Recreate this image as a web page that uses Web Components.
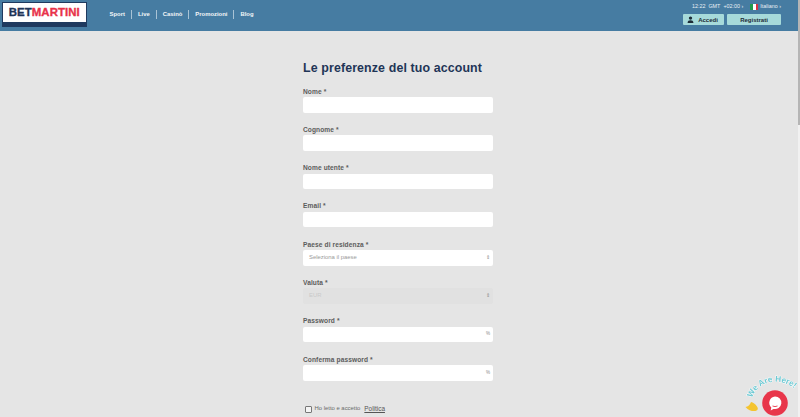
<!DOCTYPE html>
<html lang="it"><head><meta charset="utf-8"><title>Betmartini</title>
<style>
html,body{margin:0;height:417px;overflow:hidden;background:#e5e5e5;font-family:"Liberation Sans",Arial,sans-serif}
body{display:flex;flex-direction:column;width:800px}
</style></head><body>
<template id="t-header"><style>
:host{display:flex;height:31px;background:#467ca2;color:#fff;box-sizing:border-box;padding:2px 19px 0 2px;justify-content:space-between}
.left{display:flex;align-items:flex-start}
.logo{width:84.500px;height:25px;box-sizing:border-box;border:1px solid #1f3a5f;background:#fff;display:flex;flex-direction:column;overflow:hidden}
.logo b{flex:1;display:flex;align-items:center;justify-content:center;font:900 11.4px/1 "Liberation Sans",sans-serif;letter-spacing:.1px;-webkit-text-stroke:.35px currentColor;color:#1f3557;padding-top:1px}
.logo b i{font-style:normal;color:#e8324a}
.logo span{height:4px;background:#1f3a5f}
nav{display:flex;align-items:center;margin:7px 0 0 19px;height:11px}
nav a{font:bold 5.9px/1 "Liberation Sans",sans-serif;color:#f3f6f8;padding:0 6px;border-left:1px solid #a9c3d5;height:9px;display:flex;align-items:center}
nav a:first-child{border-left:0;padding-left:4px}
.right{display:flex;flex-direction:column;align-items:flex-end;width:100px}
.top{display:flex;align-items:center;font:5.4px/1 "Liberation Sans",sans-serif;color:#e8eff4;height:10px;white-space:nowrap}
.flag{display:flex;width:8px;height:6px;margin:0 2px 0 7px}
.flag i{flex:1}
.btns{display:flex;gap:3px;margin-top:2px}
.b{height:11px;background:#a6dada;border-radius:1px;display:flex;align-items:center;justify-content:center;font:bold 6px/1 "Liberation Sans",sans-serif;color:#1d2b36}
.b svg{margin-right:4px}
.a{width:41px;padding-right:2px;box-sizing:border-box}.r{width:54px}
</style>
<div class="left"><div class="logo"><b>BET<i>MARTINI</i></b><span></span></div>
<nav><a>Sport</a><a>Live</a><a>Casinò</a><a>Promozioni</a><a>Blog</a></nav></div>
<div class="right"><div class="top">12:22&nbsp; GMT&nbsp; +02:00&nbsp;›<span class="flag"><i style="background:#1f9a4d"></i><i style="background:#fff"></i><i style="background:#d9323f"></i></span>Italiano&nbsp;›</div>
<div class="btns"><div class="b a"><svg width="7" height="7" viewBox="0 0 10 10"><circle cx="5" cy="3" r="2.400" fill="#1d2b36"/><path d="M0.800 10c0-3 1.800-4 4.200-4s4.200 1 4.200 4z" fill="#1d2b36"/></svg>Accedi</div><div class="b r">Registrati</div></div></div>
</template>

<template id="t-field"><style>
:host{display:block;height:38.3px;box-sizing:border-box}
label{display:block;font:bold 6.6px/9px "Liberation Sans",sans-serif;color:#5c5c5c;height:10.5px;letter-spacing:.1px}
.box{height:15.5px;background:#fff;border-radius:2px;display:flex;align-items:center;justify-content:space-between;padding:0 3px 0 6px;font:5.9px/1 "Liberation Sans",sans-serif;color:#9a9a9a;box-sizing:border-box}
:host([disabled]) .box{background:#e1e1e1;color:#c9c9c9}
.e{font-size:4.6px;color:#8a8a8a}
</style><label><slot></slot> *</label><div class="box"><span class="v"></span><span class="e"></span></div></template>

<template id="t-form"><style>
:host{display:block;width:190px;margin:0 auto}
h1{font:bold 12.4px/18px "Liberation Sans",sans-serif;color:#1f3557;margin:0 0 10px;padding-top:.5px;letter-spacing:.12px;white-space:nowrap}
.chk{display:flex;align-items:center;font:5.9px/1 "Liberation Sans",sans-serif;color:#6a6a6a;margin:13px 0 0 2px}
.chk i{width:5px;height:5px;border:.7px solid #777;border-radius:1px;background:#f4f4f4;margin-right:2.5px}
.chk u{margin-left:4px;color:#555;font-size:6.4px}
</style><h1>Le preferenze del tuo account</h1><slot></slot>
<div class="chk"><i></i>Ho letto e accetto <u>Politica</u></div></template>

<template id="t-chat"><style>
:host{position:fixed;left:742px;top:372px;width:58px;height:45px;display:block}
svg{display:block}
text{font:bold 8.2px "Liberation Sans",sans-serif;fill:#6fc9d3;stroke:#fff;stroke-width:.8px;paint-order:stroke}
</style><svg width="58" height="45" viewBox="0 0 58 45">
<path d="M3.500 35c2.500-.5 4.500-2 5.500-5 2 .5 4.500 2 6 4.500 1.500 2 1 4-1.500 4.500-3 .5-7-.5-10-4z" fill="#f4c430"/>
<path id="c" d="M10 26 C 15 10, 38 2, 57 20" fill="none"/>
<text><textPath href="#c">We Are Here!</textPath></text>
<circle cx="33" cy="31" r="12.800" fill="#e8364a"/>
<path d="M33 24.500a6.300 6.300 0 1 1-1.500 12.400l-2.800 1.500.6-3A6.300 6.300 0 0 1 33 24.500z" fill="#fff"/>
<path d="M30.500 34q2.500 1.200 5 0" stroke="#e8364a" stroke-width=".9" fill="none"/>
</svg></template>

<template id="t-bar"><style>
:host{position:fixed;right:0;top:0;width:2.500px;height:417px;background:#f1f1f1;display:block}
div{height:125px;background:#b5b5b5}
</style><div></div></template>

<bm-header></bm-header>
<main style="padding:27px 4px 0 0;height:359px;overflow:hidden;display:block">
<bm-form>
<bm-field>Nome</bm-field><bm-field>Cognome</bm-field><bm-field>Nome utente</bm-field><bm-field>Email</bm-field>
<bm-field value="Seleziona il paese" end="⇕">Paese di residenza</bm-field>
<bm-field value="EUR" end="⇕" disabled>Valuta</bm-field>
<bm-field end="%">Password</bm-field><bm-field end="%">Conferma password</bm-field>
</bm-form></main>
<bm-chat></bm-chat><bm-bar></bm-bar>
<script>
function def(name,id,init){customElements.define(name,class extends HTMLElement{constructor(){super();this.attachShadow({mode:'open'}).appendChild(document.getElementById(id).content.cloneNode(true));}connectedCallback(){init&&init(this)}})}
def('bm-header','t-header');def('bm-form','t-form');def('bm-chat','t-chat');def('bm-bar','t-bar');
def('bm-field','t-field',e=>{e.shadowRoot.querySelector('.v').textContent=e.getAttribute('value')||'';e.shadowRoot.querySelector('.e').textContent=e.getAttribute('end')||''});
</script>
</body></html>
